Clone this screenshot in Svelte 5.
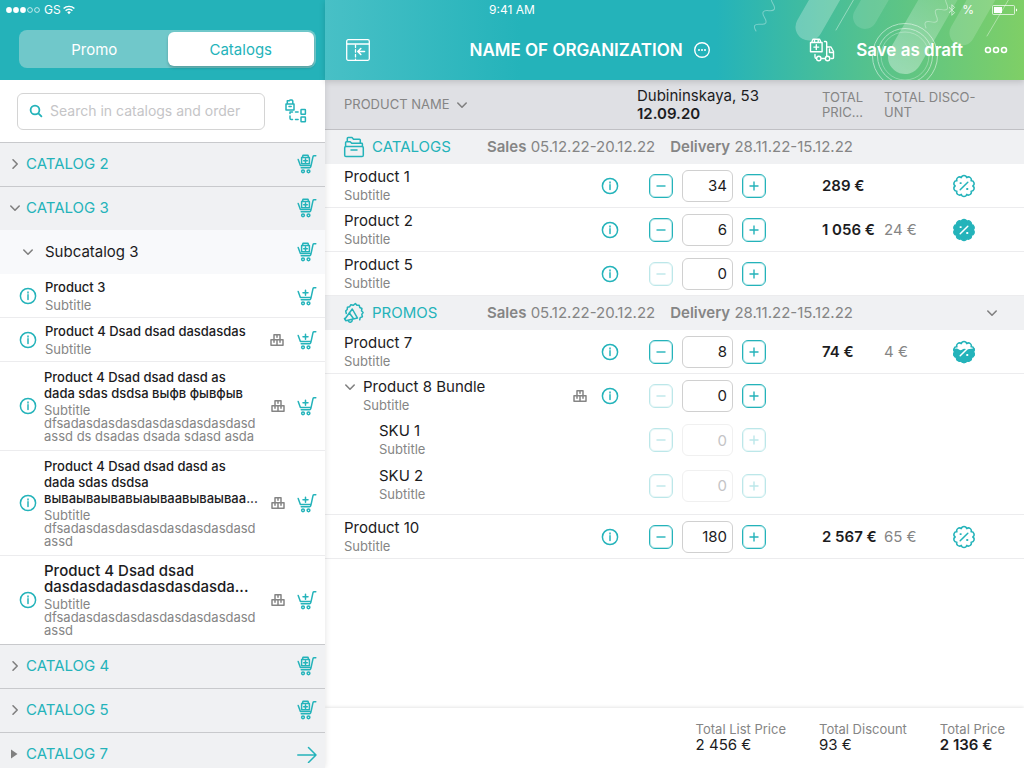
<script>
  const catalogsTop = [{ name: 'CATALOG 2', open: false }, { name: 'CATALOG 3', open: true }];
  const catalogsBottom = ['CATALOG 4', 'CATALOG 5'];
  const items = [
    { title: 'Product 3', sub: 'Subtitle' },
    { title: 'Product 4 Dsad dsad dasdasdas', sub: 'Subtitle', bundle: true },
    { title: 'Product 4 Dsad dsad dasd as\ndada sdas dsdsa выфв фывфыв', sub: 'Subtitle\ndfsadasdasdasdasdasdasdasdasd\nassd ds dsadas dsada sdasd asda', bundle: true, long: true },
    { title: 'Product 4 Dsad dsad dasd as\ndada sdas dsdsa\nвываываывавыаываавываываа...', sub: 'Subtitle\ndfsadasdasdasdasdasdasdasdasd\nassd', bundle: true, long: true },
    { title: 'Product 4 Dsad dsad\ndasdasdadasdasdasdasda...', sub: 'Subtitle\ndfsadasdasdasdasdasdasdasdasd\nassd', bundle: true, long: true, large: true }
  ];
  const groups = [
    { name: 'CATALOGS', rows: [
      { title: 'Product 1', qty: 34, price: '289 €', badge: 'outline' },
      { title: 'Product 2', qty: 6, price: '1 056 €', discount: '24 €', badge: 'full' },
      { title: 'Product 5', qty: 0 }
    ] },
    { name: 'PROMOS', promo: true, rows: [
      { title: 'Product 7', qty: 8, price: '74 €', discount: '4 €', badge: 'half' },
      { title: 'Product 8 Bundle', qty: 0, bundle: true },
      { title: 'SKU 1', qty: 0, sku: true },
      { title: 'SKU 2', qty: 0, sku: true, last: true },
      { title: 'Product 10', qty: 180, price: '2 567 €', discount: '65 €', badge: 'outline' }
    ] }
  ];
  const totals = [
    { label: 'Total List Price', value: '2 456 €' },
    { label: 'Total Discount', value: '93 €' },
    { label: 'Total Price', value: '2 136 €', strong: true }
  ];

  function scallop(c, r, lobes, lobe) {
    const pts = Array.from({ length: lobes + 1 }, (_, i) => {
      const a = ((i + 0.5) / lobes) * Math.PI * 2 - Math.PI / 2;
      return `${(c + r * Math.cos(a)).toFixed(2)} ${(c + r * Math.sin(a)).toFixed(2)}`;
    });
    return `M${pts[0]}` + pts.slice(1).map((p) => `A${lobe} ${lobe} 0 0 1 ${p}`).join('') + 'Z';
  }
  const seal = scallop(11, 8.8, 10, 2.8);
</script>

{#snippet chevron(dir)}
  <svg class="chev" class:right={dir === 'right'} width="12" height="12" viewBox="0 0 12 12"><path d="M1.8 4 6 8.2 10.2 4" /></svg>
{/snippet}

{#snippet cart(box)}
  <svg class="ic" width="20" height="20" viewBox="0 0 20 20">
    <path d="M1.2 5.5 3.4 11.4h10.7L16 2.6q.2-.9 1.1-.9h1.7M14.1 11.4l-.4 1.5q-.2.8-1 .8H4.2" />
    <circle cx="6" cy="17.3" r="1.4" /><circle cx="11.5" cy="17.3" r="1.4" />
    {#if box}
      <path d="M4.6 3.6h7.8v6.2H4.6zM5.4 3.5 6 1.3h5l.6 2.2M8.5 5v3.6M6.7 6.8h3.6" />
    {:else}
      <path d="M8.5 4.2v5M6 6.7h5" />
    {/if}
  </svg>
{/snippet}

{#snippet info(label)}
  <button class="plain" aria-label={`About ${label}`}>
    <svg class="ic" width="18" height="18" viewBox="0 0 18 18">
      <circle cx="9" cy="9" r="7.6" /><path d="M9 7.8v4.7" /><path d="M9 5v1.1" />
    </svg>
  </button>
{/snippet}

{#snippet boxes()}
  <svg class="ic gray" width="14" height="14" viewBox="0 0 14 14">
    <path d="M4 1.7h6v5.1H4zM1 6.800h6v5.500H1zM7 6.800h6v5.500H7zM7 1.700v2.500M4 6.800v2.500M10 6.800v2.500" />
  </svg>
{/snippet}

{#snippet badge(kind)}
  <svg class="ic" width="24" height="24" viewBox="-1 -1 24 24">
    {#if kind === 'full'}<path class="fill" d={seal} />{:else}<path d={seal} />{/if}
    {#if kind === 'half'}
      <clipPath id="lower"><path d="M-1 8 4 7.600 7.500 9.200 11 7.800 15 8.200 23 7V23H-1z" /></clipPath>
      <g clip-path="url(#lower)"><path class="fill" d={seal} /></g>
    {/if}
    <g class:light={kind !== 'outline'}>
      <path d="m7.2 14.8 7.6-7.6" /><path d="M7.4 8.1h.5M14 14h.5" stroke-width="1.8" />
    </g>
  </svg>
{/snippet}

<div class="page">
  <div class="status">
    <div class="signal">
      <svg width="36" height="8" viewBox="0 0 36 8">
        <circle cx="3" cy="4" r="2.9" fill="#fff" /><circle cx="10" cy="4" r="2.9" fill="#fff" /><circle cx="17" cy="4" r="2.9" fill="#fff" />
        <circle cx="24" cy="4" r="2.4" fill="none" stroke="#fff" stroke-width=".7" /><circle cx="31" cy="4" r="2.4" fill="none" stroke="#fff" stroke-width=".7" />
      </svg>
      <span>GS</span>
      <svg width="12" height="10" viewBox="0 0 12 10" fill="none" stroke="#fff" stroke-width="1.4">
        <path d="M.6 3.6a7.6 7.6 0 0 1 10.8 0M2.6 5.7a4.8 4.8 0 0 1 6.8 0" /><path d="M4.2 7.2a2.6 2.6 0 0 1 3.6 0L6 9.2z" fill="#fff" stroke="none" />
      </svg>
    </div>
    <span>9:41 AM</span>
    <div class="power">
      <svg width="8" height="12" viewBox="0 0 8 12" fill="none" stroke="#fff" stroke-width=".9" opacity=".7"><path d="M1 3.300 6.600 8.600 3.900 11.300V.7L6.600 3.400 1 8.700" /></svg>
      <span>%</span>
      <svg class="battery" width="26" height="11" viewBox="0 0 26 11">
        <rect x=".5" y=".5" width="22" height="9" rx="1" fill="none" stroke="#fff" opacity=".7" /><rect x="2" y="2" width="8" height="6" fill="#fff" /><path d="M24 3.500v3q1.200-.3 1.200-1.500T24 3.500" fill="#fff" />
      </svg>
    </div>
  </div>

  <aside>
    <header class="side-head">
      <div class="segments">
        <button>Promo</button>
        <button class="active">Catalogs</button>
      </div>
    </header>
    <div class="search">
      <label>
        <svg class="ic lens" width="14" height="14" viewBox="0 0 14 14"><circle cx="6" cy="6" r="4.400" /><path d="m9.400 9.400 3 3" /></svg>
        <input type="text" placeholder="Search in catalogs and order" aria-label="Search in catalogs and order" />
      </label>
      <button class="plain" aria-label="Catalog tree">
        <svg class="ic" width="24" height="26" viewBox="0 0 24 26">
          <path d="M2 6h8v6H2zM3.300 5.800V2.800h2l.8-.9H8L8.800 3v2.800M5 8.500h2.200" />
          <path d="M6 15.500V14h2.500M11.500 14h2.600M6 18v2.200q0 1.300 1.200 1.300H8.500M11.500 21.500h2.600" />
          <rect x="17" y="11.400" width="4.400" height="4.800" rx=".5" /><rect x="17" y="19" width="4.400" height="4.800" rx=".5" />
        </svg>
      </button>
    </div>

    <div class="tree">
      {#each catalogsTop as c}
        <div class="catalog">
          {@render chevron(c.open ? 'down' : 'right')}
          <span>{c.name}</span>
          <button class="plain" aria-label={`Add ${c.name}`}>{@render cart(true)}</button>
        </div>
      {/each}
      <div class="catalog sub-catalog">
        {@render chevron('down')}
        <span>Subcatalog 3</span>
        <button class="plain" aria-label="Add Subcatalog 3">{@render cart(true)}</button>
      </div>
      {#each items as item}
        <div class="item" class:long={item.long} class:large={item.large}>
          {@render info(item.title)}
          <div class="item-text">
            <div class="item-title">{item.title}</div>
            <div class="item-sub">{item.sub}</div>
          </div>
          {#if item.bundle}{@render boxes()}{/if}
          <button class="plain" aria-label={`Add ${item.title}`}>{@render cart(false)}</button>
        </div>
      {/each}
      {#each catalogsBottom as name}
        <div class="catalog">
          {@render chevron('right')}
          <span>{name}</span>
          <button class="plain" aria-label={`Add ${name}`}>{@render cart(true)}</button>
        </div>
      {/each}
      <div class="catalog">
        <svg width="12" height="12" viewBox="0 0 12 12"><path d="M2 1.500 8.500 6 2 10.500z" fill="#808080" /></svg>
        <span>CATALOG 7</span>
        <button class="plain" aria-label="Open CATALOG 7">
          <svg class="ic" width="20" height="18" viewBox="0 0 20 18"><path d="M.8 10h18.200M11.500 2.500 19 10l-7.500 7.500" /></svg>
        </button>
      </div>
    </div>
  </aside>

  <main>
    <header class="main-head">
      <svg class="decor" width="304" height="80" viewBox="0 0 304 80" fill="none" stroke="#fff" stroke-linecap="round">
        <defs>
          <linearGradient id="fade" gradientUnits="userSpaceOnUse" x1="185" y1="70" x2="225" y2="0">
            <stop offset="0" stop-color="#fff" stop-opacity=".36" /><stop offset="1" stop-color="#fff" stop-opacity=".14" />
          </linearGradient>
        </defs>
        <path d="M89 27 116-20" stroke-width="27" opacity=".26" />
        <path d="M145 17 170-26" stroke-width="24" opacity=".13" />
        <path d="M185 57 230-21" stroke-width="34" stroke="url(#fade)" />
        <path d="M242 33 273-21" stroke-width="25" opacity=".16" />
        <path d="M116 30 134-1M267 36 289-1" stroke-width="1" opacity=".4" />
        <g stroke-width="1" opacity=".35">
          <path transform="translate(36 31) rotate(-58)" d="M0 0q4-8 8 0t8 0 8 0 8 0 8 0" />
          <path transform="translate(206 28) rotate(-50)" d="M0 0q4-8 8 0t8 0 8 0 8 0 8 0" />
        </g>
        <g stroke-width="1" opacity=".5"><circle cx="185" cy="56" r="32.500" /><circle cx="185" cy="56" r="27.500" /><circle cx="185" cy="56" r="24" opacity=".6" /></g>
      </svg>
      <button class="plain" aria-label="Collapse panel">
        <svg width="26" height="24" viewBox="0 0 26 24" fill="none" stroke="#fff" stroke-width="1.300" stroke-linecap="round" stroke-linejoin="round">
          <rect x="1.700" y="1.700" width="22.600" height="20.600" rx="1.500" /><path d="M2 6h22" /><path d="M10.500 7v14.500" stroke-dasharray="2.500 2.200" /><path d="M19.500 13.500h-6.500m2.800-3-3 3 3 3" stroke-width="1.600" />
        </svg>
      </button>
      <div class="org">
        <h1>NAME OF ORGANIZATION</h1>
        <button class="plain" aria-label="Organization details">
          <svg width="18" height="18" viewBox="0 0 18 18"><circle cx="9" cy="9" r="7.300" fill="none" stroke="#fff" stroke-width="1.400" /><g fill="#fff"><circle cx="6" cy="9" r="1" /><circle cx="9" cy="9" r="1" /><circle cx="12" cy="9" r="1" /></g></svg>
        </button>
      </div>
      <div class="actions">
        <button class="plain" aria-label="Delivery">
          <svg width="26" height="24" viewBox="0 0 26 24" fill="none" stroke="#fff" stroke-width="1.400" stroke-linecap="round" stroke-linejoin="round">
            <path d="M1.500 4.500h11.600v9.300H1.500zM2.800 4.300l.8-2.400q.2-.7 1-.7H10q.8 0 1 .7l.8 2.400M5.500 1.500v2.700M9.200 1.500v2.700M7.300 6.700v4.800M4.900 9.100h4.800" />
            <path d="M15.500 3.500h1.300q.9 0 .9.900v13.400M18 9h4l2.500 4.500v6.300q0 .7-.7.700H22M20.500 11v3.500h3.500M6 16.500v2.600q0 1.400 1.200 1.400M12.500 20.500h3.200" />
            <circle cx="9.800" cy="20.500" r="2.200" /><circle cx="18.600" cy="20.500" r="2.200" />
          </svg>
        </button>
        <button class="plain draft">Save as draft</button>
        <button class="plain" aria-label="More">
          <svg width="24" height="8" viewBox="0 0 24 8" fill="none" stroke="#fff" stroke-width="1.600"><circle cx="4" cy="4" r="2.500" /><circle cx="12" cy="4" r="2.500" /><circle cx="20" cy="4" r="2.500" /></svg>
        </button>
      </div>
    </header>

    <div class="order">
      <table>
        <colgroup>
          <col /><col class="c-icon" /><col class="c-icon" /><col class="c-qty" /><col class="c-sum" /><col class="c-sum" /><col class="c-badge" />
        </colgroup>
        <thead>
          <tr>
            <th colspan="3" class="name-head"><span>PRODUCT NAME {@render chevron('down')}</span></th>
            <th class="place">Dubininskaya, 53<br /><b>12.09.20</b></th>
            <th>TOTAL<br />PRIC...</th>
            <th colspan="2">TOTAL DISCO-<br />UNT</th>
          </tr>
        </thead>
        {#each groups as g}
          <tbody>
            <tr class="group">
              <th colspan="7">
                <div class="group-line">
                  <span class="group-name">
                    {#if g.promo}
                      <svg class="ic" width="22" height="22" viewBox="0 0 22 22">
                        <path d="M3.300 11.500 2.700 9l1.500-1.500.2-2.200 2.300-.6 1.200-2 2.300.6L12.400 1.500l1.500 1.800 2.300-.1.600 2.300 2.100 1-.4 2.300 1.600 1.700-1.300 1.900.6 2.300-2.200.9-.5 2.200" />
                        <path d="M9.300 7 1.700 17.200l1 1.500 11.800-2.600zM6.200 10.800l4.400 6M5.500 18.600q.3 2 2 1.700t1.800-2.300M1.500 16.500l1.500 2.300" />
                      </svg>
                    {:else}
                      <svg class="ic" width="22" height="22" viewBox="0 0 22 22">
                        <rect x="1.700" y="10.500" width="18.600" height="10" rx="1.300" /><path d="M8 14h6" />
                        <path d="M2.600 10.300V6.500q0-.8.800-.8h3.800l1.500 1.500h10q.7 0 .7.700v2.400M4.300 5.500V2.300q0-.8.800-.8H9l1.500 1.700h6q.8 0 .8.800v3" />
                      </svg>
                    {/if}
                    {g.name}
                  </span>
                  <span class="period"><b>Sales</b> 05.12.22-20.12.22</span>
                  <span class="period"><b>Delivery</b> 28.11.22-15.12.22</span>
                  {#if g.promo}<button class="plain toggle" aria-label="Collapse promos">{@render chevron('down')}</button>{/if}
                </div>
              </th>
            </tr>
            {#each g.rows as r}
              <tr class="row" class:open={r.bundle || (r.sku && !r.last)} class:sku={r.sku} class:last={r.last}>
                <td class="name">
                  <div class="name-line">
                    {#if r.bundle}{@render chevron('down')}{/if}
                    <div><div class="title">{r.title}</div><div class="subtitle">Subtitle</div></div>
                  </div>
                </td>
                <td class="mid">{#if r.bundle}{@render boxes()}{/if}</td>
                <td class="mid">{#if !r.sku}{@render info(r.title)}{/if}</td>
                <td>
                  <div class="qty">
                    <button class="step" disabled={r.qty === 0} aria-label={`Less ${r.title}`}><svg width="12" height="12" viewBox="0 0 12 12"><path d="M1.500 6h9" /></svg></button>
                    <input type="text" value={r.qty} disabled={r.sku} aria-label={`Quantity of ${r.title}`} />
                    <button class="step" disabled={r.sku} aria-label={`More ${r.title}`}><svg width="12" height="12" viewBox="0 0 12 12"><path d="M1.500 6h9M6 1.500v9" /></svg></button>
                  </div>
                </td>
                <td class="price">{r.price ?? ''}</td>
                <td class="discount">{r.discount ?? ''}</td>
                <td class="mark">{#if r.badge}{@render badge(r.badge)}{/if}</td>
              </tr>
            {/each}
          </tbody>
        {/each}
      </table>
    </div>

    <footer>
      {#each totals as t}
        <div class="total"><span>{t.label}</span><strong class:strong={t.strong}>{t.value}</strong></div>
      {/each}
    </footer>
  </main>
</div>

<style>
  :global(body) { background: #fff; }
  .page, .page * { box-sizing: border-box; }
  .page {
    position: relative;
    display: grid;
    grid-template-columns: 325px minmax(0, 1fr);
    height: 100vh;
    overflow: hidden;
    font: 14px/18px Inter, "Liberation Sans", sans-serif;
    color: #1c1c1e;
  }
  svg { display: block; flex: none; }
  button, input { font: inherit; margin: 0; }
  .plain { display: flex; align-items: center; padding: 0; border: 0; background: none; color: inherit; }
  .ic { fill: none; stroke: #24b3ba; stroke-width: 1.5; stroke-linecap: round; stroke-linejoin: round; }
  .ic.gray { stroke: #858585; }
  .ic.lens { stroke-width: 1.8; }
  .ic .fill { fill: #24b3ba; }
  .light { stroke: #fff; }
  .chev { fill: none; stroke: #808080; stroke-width: 1.6; stroke-linecap: round; stroke-linejoin: round; }
  .chev.right { transform: rotate(-90deg); }

  .status {
    position: absolute;
    inset: 0 0 auto;
    z-index: 3;
    display: grid;
    grid-template-columns: 1fr auto 1fr;
    align-items: center;
    height: 20px;
    padding: 0 6px;
    color: #fff;
    font-size: 12px;
  }
  .signal, .power { display: flex; align-items: center; gap: 2px; }
  .power { justify-content: flex-end; gap: 6px; }
  .battery { margin-left: 12px; }

  aside { position: relative; z-index: 1; display: flex; flex-direction: column; min-height: 0; background: #fff; box-shadow: 0 0 6px rgba(0, 0, 0, .12); }
  .side-head { flex: none; height: 80px; padding: 30px 9px 0 19px; background: #24b2b9; }
  .segments { display: grid; grid-template-columns: 1fr 1fr; padding: 2px; border-radius: 8px; background: #70c8ca; }
  .segments button { height: 34px; padding: 2px 0 0; border: 0; border-radius: 6px; background: none; color: #fff; font-size: 15px; }
  .segments .active { background: #fff; color: #24b3ba; box-shadow: 0 2px 3px rgba(0, 0, 0, .2); }
  .search { display: flex; flex: none; align-items: center; gap: 19px; height: 62px; padding: 0 17px; }
  .search label { display: flex; flex: 1; align-items: center; gap: 7px; height: 37px; min-width: 0; padding: 0 11px; border: 1px solid #d4d4d4; border-radius: 6px; }
  .search input { flex: 1; min-width: 0; padding: 0; border: 0; outline: 0; background: none; font-size: 14px; }
  .search input::placeholder { color: #c5c5c7; }
  .tree { flex: 1; min-height: 0; overflow-y: auto; scrollbar-width: none; }
  .catalog { display: flex; align-items: center; gap: 5px; height: 44px; padding: 0 8px 2px 9px; border-top: 1px solid #c8c9cc; background: #f0f1f3; color: #24b3ba; font-size: 15px; }
  .catalog .plain { margin-left: auto; }
  .sub-catalog { gap: 11px; padding-left: 22px; border-top-color: #f8f9fb; background: #f8f9fb; color: #1c1c1e; }
  .item { display: flex; align-items: center; gap: 8px; padding: 5px 8px 5px 19px; border-bottom: 1px solid #ececee; }
  .item.long { padding-top: 7px; padding-bottom: 7px; gap: 7px; }
  .item.large { border-bottom: 0; }
  .item-text { flex: 1; min-width: 0; }
  .item .gray { margin-right: 5px; }
  .item-title { font-size: 13px; line-height: 16px; font-weight: 500; white-space: pre; }
  .large .item-title { font-size: 15px; }
  .item-sub { margin-top: 4px; color: #858585; font-size: 13px; line-height: 13px; white-space: pre; }
  .long .item-sub { margin-top: 3px; }

  main { display: flex; flex-direction: column; min-width: 0; min-height: 0; }
  .main-head {
    position: relative;
    z-index: 1;
    display: flex;
    flex: none;
    justify-content: space-between;
    height: 80px;
    padding: 20px 16px 0 20px;
    color: #fff;
    background: linear-gradient(90deg, #48c0c6 0, #24b3ba 28%, #24b3ba 56%, #55c28d 78%, #7fcf66 100%);
    box-shadow: 0 2px 6px rgba(0, 0, 0, .15);
  }
  .main-head > :not(.decor) { position: relative; display: flex; align-items: center; }
  .decor { position: absolute; top: 0; right: 0; }
  .org { gap: 10px; }
  h1 { margin: 0; font-size: 17px; font-weight: 600; }
  .actions { gap: 21px; }
  .draft { font-size: 17px; font-weight: 600; }

  .order { flex: 1; min-height: 0; overflow: auto; scrollbar-width: none; }
  table { width: 100%; table-layout: fixed; border-collapse: separate; border-spacing: 0; }
  th, td { padding: 0; text-align: left; font-weight: 400; }
  .c-icon { width: 30px; }
  .c-qty { width: 197px; }
  .c-sum { width: 62px; }
  .c-badge { width: 78px; }
  thead th { height: 50px; border-bottom: 1px solid #c0c0c4; background: #dfe0e4; color: #858585; font-size: 13px; line-height: 15px; }
  .name-head { padding-left: 19px; }
  .name-head span { display: flex; align-items: center; gap: 6px; }
  .place { padding-left: 12px; color: #1c1c1e; font-size: 15px; line-height: 18px; white-space: nowrap; }
  b { font-weight: 600; }
  .group th { height: 34px; background: #f0f1f3; }
  .group-line { display: flex; align-items: center; gap: 15px; padding: 0 26px 0 18px; }
  .group-name { display: flex; align-items: center; gap: 7px; width: 129px; color: #24b3ba; font-size: 15px; }
  .period { color: #858585; font-size: 15px; white-space: nowrap; }
  .toggle { margin-left: auto; }
  .row td { height: 44px; border-bottom: 1px solid #ececee; white-space: nowrap; }
  .row.open td { border-bottom-color: transparent; }
  .row.sku td { height: 45px; }
  .row.last td { height: 52px; padding-bottom: 6px; }
  .row .name { padding: 4px 0 0 19px; vertical-align: top; }
  .row.sku .name { padding-left: 54px; }
  .name-line { display: flex; gap: 7px; }
  .name-line :global(.chev) { margin-top: 3px; }
  .title { font-size: 15px; }
  .subtitle { color: #858585; font-size: 13px; }
  .mid svg, .mid button { margin: 0 auto; }
  .qty { display: flex; align-items: center; gap: 9px; padding-left: 24px; }
  .qty input { width: 51px; height: 32px; padding: 0 5px; border: 1px solid #d0d0d0; border-radius: 6px; background: #fff; color: #1c1c1e; font-size: 15px; text-align: right; }
  .qty input:disabled { border-color: #f0f0f0; color: #c4c4c6; }
  .step { display: grid; place-items: center; width: 24px; height: 24px; padding: 0; border: 1px solid #24b3ba; border-radius: 6px; background: #fff; box-shadow: inset 0 0 0 1px rgba(36, 179, 186, .3); }
  .step svg { fill: none; stroke: #24b3ba; stroke-width: 1.4; }
  .step:disabled { opacity: .3; }
  .price { font-size: 15px; font-weight: 600; }
  .discount { color: #858585; font-size: 15px; }
  .mark { padding-left: 6px; }

  footer { display: flex; flex: none; justify-content: flex-end; gap: 33px; height: 60px; padding: 14px 19px 0; background: #fff; box-shadow: 0 -1px 3px rgba(0, 0, 0, .1); }
  .total { display: flex; flex-direction: column; color: #858585; font-size: 13px; line-height: 15px; }
  .total strong { color: #1c1c1e; font-size: 15px; font-weight: 400; }
  .total .strong { font-weight: 600; }
</style>
